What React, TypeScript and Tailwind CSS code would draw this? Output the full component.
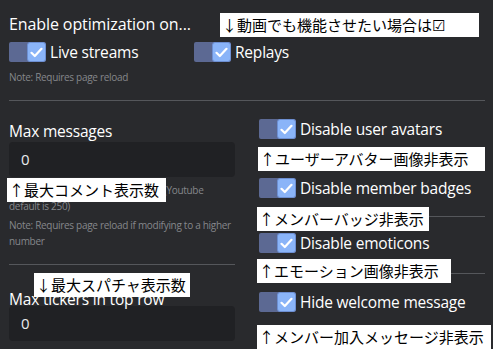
import type { ReactNode } from "react";

const UI = { fontFamily: '"Open Sans", "Noto Sans", sans-serif' };
const JP = { fontFamily: '"Noto Sans CJK JP", "Noto Sans", sans-serif' };

function Toggle({ label }: { label: string }) {
  return (
    <div className="flex items-center gap-[4px] h-[20px]">
      <div className="flex w-[37px] h-[20px] rounded-[2px] bg-[#5c6993] justify-end">
        <div className="w-[19px] h-[20px] rounded-[3px] bg-[#8ab4f8] border border-[#6d8fd2] flex items-center justify-center">
          <svg width="13" height="11" viewBox="0 0 13 11">
            <path d="M1.5 5.8 L4.8 9 L11.5 1.8" fill="none" stroke="#fff" strokeWidth="2.2" strokeLinecap="round" strokeLinejoin="round" />
          </svg>
        </div>
      </div>
      <span className="text-[15.5px] leading-[20px] tracking-[-0.2px] text-white">{label}</span>
    </div>
  );
}

function Sticky({ children, className }: { children: ReactNode; className: string }) {
  return (
    <div
      style={JP}
      className={"absolute bg-white text-black text-[15px] leading-[24px] h-[24px] pl-[2px] whitespace-nowrap " + className}
    >
      {children}
    </div>
  );
}

function Line({ className = "" }: { className?: string }) {
  return <div className={"h-px bg-[#55575b] " + className} />;
}

const note = "text-[10px] leading-[16px] tracking-[-0.3px] text-[#85878b]";

export default function App() {
  return (
    <div style={UI} className="relative w-[493px] h-[349px] overflow-hidden bg-[#292a2d] text-white">
      <div className="px-[9px] pt-[14px] pr-[8px]">
        <div className="text-[16px] leading-[20px] tracking-[-0.1px]">Enable optimization on...</div>
        <div className="flex mt-[8px]">
          <div className="w-[185px]">
            <Toggle label="Live streams" />
          </div>
          <Toggle label="Replays" />
        </div>
        <div className={"mt-[7px] " + note}>Note: Requires page reload</div>
        <Line className="mt-[15px]" />

        <div className="grid grid-cols-2 gap-x-[24px] mt-[15px]">
          <div>
            <div className="mt-[5px] text-[15.5px] leading-[20px] tracking-[-0.2px]">Max messages</div>
            <div className="mt-[1px] h-[35px] rounded-[4px] bg-[#202124] flex items-center px-[12px] text-[15px] text-[#e8eaed]">
              0
            </div>
            <div className={"mt-[5px] " + note}>
              Maximum number of messages <span className="ml-[13px]">(Youtube</span>
              <br />
              default is 250)
            </div>
            <div className={"mt-[3px] " + note}>
              Note: Requires page reload if modifying to a higher number
            </div>
            <Line className="mt-[15px]" />
            <div className="mt-[24px] text-[15.5px] leading-[20px] tracking-[-0.2px]">Max tickers in top row</div>
            <div className="mt-[-3px] h-[35px] rounded-[4px] bg-[#202124] flex items-center px-[12px] text-[15px] text-[#e8eaed]">
              0
            </div>
          </div>

          <div className="pt-[3px]">
            <Toggle label="Disable user avatars" />
            <Line className="mt-[18px]" />
            <div className="mt-[20px]">
              <Toggle label="Disable member badges" />
            </div>
            <Line className="mt-[18px]" />
            <div className="mt-[16px]">
              <Toggle label="Disable emoticons" />
            </div>
            <Line className="mt-[20px]" />
            <div className="mt-[18px]">
              <Toggle label="Hide welcome message" />
            </div>
          </div>
        </div>
      </div>

      <Sticky className="left-[220px] top-[13px] w-[259px]">↓動画でも機能させたい場合は☑</Sticky>
      <Sticky className="left-[7px] top-[178px] w-[159px]">↑最大コメント表示数</Sticky>
      <Sticky className="left-[34px] top-[273px] w-[156px]">↓最大スパチャ表示数</Sticky>
      <Sticky className="left-[258px] top-[147px] w-[227px]">↑ユーザーアバター画像非表示</Sticky>
      <Sticky className="left-[257px] top-[207px] w-[172px]">↑メンバーバッジ非表示</Sticky>
      <Sticky className="left-[257px] top-[259px] w-[194px]">↑エモーション画像非表示</Sticky>
      <Sticky className="left-[257px] top-[325px] w-[234px]">↑メンバー加入メッセージ非表示</Sticky>
    </div>
  );
}
